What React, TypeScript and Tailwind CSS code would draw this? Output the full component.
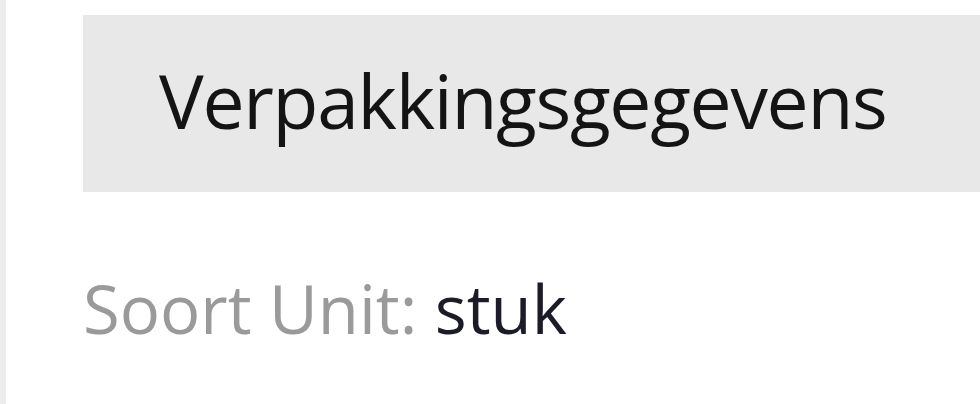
export default function App() {
  return (
    <div className="flex h-[404px] w-[980px] overflow-hidden bg-white" style={{ fontFamily: '"Open Sans", sans-serif' }}>
      <div className="w-[6px] shrink-0 bg-[#ececec]" />
      <div className="flex-1 pl-[77px] pt-[15px]">
        <div className="flex h-[177px] items-center bg-[#e8e8e8] pl-[76px] pb-[8px]">
          <h2 className="text-[75px] leading-[100px] tracking-[-1.3px] text-[#141414]">Verpakkingsgegevens</h2>
        </div>
        <p className="mt-[76px] text-[67px] leading-[80px] text-[#9a9a9a]">
          Soort Unit: <span className="text-[#1c1c28]">stuk</span>
        </p>
      </div>
    </div>
  );
}
